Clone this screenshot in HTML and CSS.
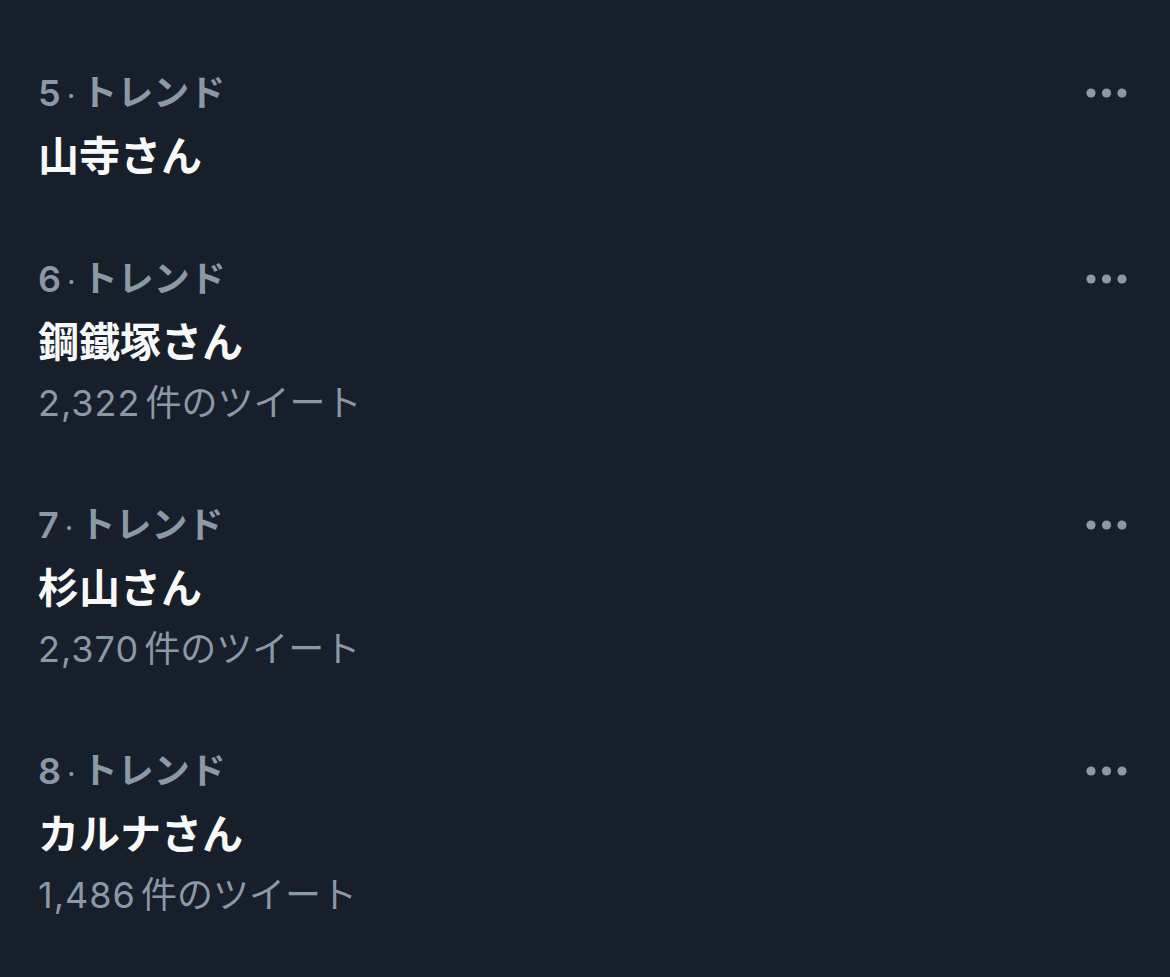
FILE: index.html
```html
<!DOCTYPE html>
<html lang="ja">
<head>
<meta charset="utf-8">
<title>トレンド</title>
<link rel="stylesheet" href="styles.css">
</head>
<body>
<main class="trends">
  <section class="trend">
    <div class="trend-body">
      <div class="trend-meta">5<span class="sep">·</span>トレンド</div>
      <div class="trend-title">山寺さん</div>
    </div>
    <button class="more" aria-label="その他">
      <svg width="42" height="10" viewBox="0 0 42 10"><circle cx="5" cy="5" r="4.6"/><circle cx="20.5" cy="5" r="4.6"/><circle cx="36" cy="5" r="4.6"/></svg>
    </button>
  </section>
  <section class="trend">
    <div class="trend-body">
      <div class="trend-meta">6<span class="sep">·</span>トレンド</div>
      <div class="trend-title">鋼鐵塚さん</div>
      <div class="trend-count"><span class="num">2,322</span><span class="unit">件のツイート</span></div>
    </div>
    <button class="more" aria-label="その他">
      <svg width="42" height="10" viewBox="0 0 42 10"><circle cx="5" cy="5" r="4.6"/><circle cx="20.5" cy="5" r="4.6"/><circle cx="36" cy="5" r="4.6"/></svg>
    </button>
  </section>
  <section class="trend">
    <div class="trend-body">
      <div class="trend-meta">7<span class="sep">·</span>トレンド</div>
      <div class="trend-title">杉山さん</div>
      <div class="trend-count"><span class="num">2,370</span><span class="unit">件のツイート</span></div>
    </div>
    <button class="more" aria-label="その他">
      <svg width="42" height="10" viewBox="0 0 42 10"><circle cx="5" cy="5" r="4.6"/><circle cx="20.5" cy="5" r="4.6"/><circle cx="36" cy="5" r="4.6"/></svg>
    </button>
  </section>
  <section class="trend">
    <div class="trend-body">
      <div class="trend-meta">8<span class="sep">·</span>トレンド</div>
      <div class="trend-title">カルナさん</div>
      <div class="trend-count"><span class="num">1,486</span><span class="unit">件のツイート</span></div>
    </div>
    <button class="more" aria-label="その他">
      <svg width="42" height="10" viewBox="0 0 42 10"><circle cx="5" cy="5" r="4.6"/><circle cx="20.5" cy="5" r="4.6"/><circle cx="36" cy="5" r="4.6"/></svg>
    </button>
  </section>
</main>
</body>
</html>
```
FILE: styles.css
```css
html, body {
  margin: 0;
  padding: 0;
  background: #171f2a;
}

body {
  font-family: "Inter", "Noto Sans CJK JP", sans-serif;
  color: #f7f9f9;
  height: 977px;
  overflow: hidden;
}

.trends {
  display: flex;
  flex-direction: column;
  gap: 60px;
  padding: 61px 42px 0 38px;
}

.trend {
  display: flex;
  align-items: flex-start;
  justify-content: space-between;
}

.trend-body {
  display: flex;
  flex-direction: column;
}

.trend-meta {
  font-size: 36px;
  line-height: 64px;
  height: 64px;
  font-weight: 600;
  color: #8b98a5;
}

.sep {
  font-weight: 400;
  font-size: 30px;
  margin: 0 6px 0 6px;
}

.trend-title {
  font-size: 41px;
  line-height: 62px;
  height: 62px;
  font-weight: 700;
  color: #f7f9f9;
}

.trend-count {
  font-size: 36px;
  line-height: 60px;
  height: 60px;
  font-weight: 400;
  color: #8b98a5;
}

.num {
  letter-spacing: 1px;
}

.unit {
  margin-left: 5px;
}

.more {
  display: flex;
  align-items: center;
  justify-content: flex-end;
  height: 64px;
  padding: 0;
  border: 0;
  background: none;
  fill: #8b98a5;
}
```
